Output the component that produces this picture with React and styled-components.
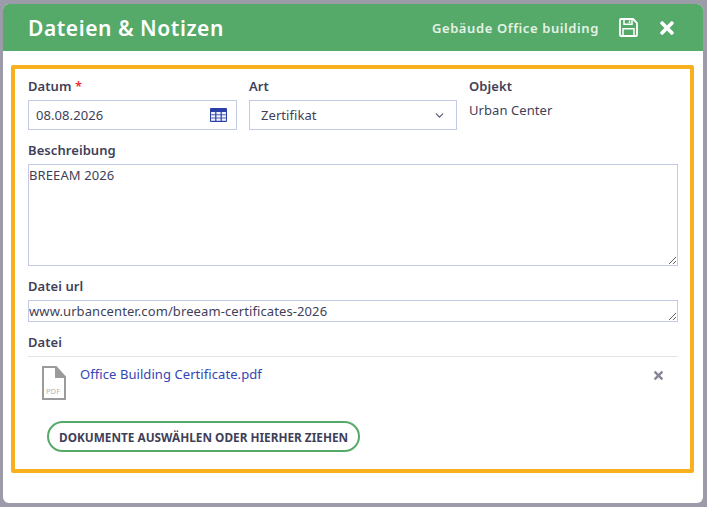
import React from "react";
import styled, { createGlobalStyle } from "styled-components";
import { FaTimes } from "react-icons/fa";
import { ChevronDown } from "lucide-react";

const Global = createGlobalStyle`
  html, body { margin: 0; padding: 0; }
  body { background: #9b9ba9; font-family: "Noto Sans", sans-serif; color: #3f3f5a; letter-spacing: 0.07px; }
`;
const Backdrop = styled.div`
  width: 707px; height: 507px; box-sizing: border-box; padding: 4px 4px 4px 3px;
`;
const Modal = styled.div`
  height: 499px; background: #fff; border-radius: 6px; overflow: hidden;
  display: flex; flex-direction: column;
`;
const Header = styled.header`
  height: 47px; flex: none; background: #55aa69; color: #fff; display: flex; align-items: center;
  padding: 0 26px 0 25px;
`;
const Title = styled.h1`
  margin: 1px 0 0; font-size: 21px; font-weight: 600; letter-spacing: 0.55px; flex: 1;
`;
const Context = styled.span`
  font-size: 13px; font-weight: 600; letter-spacing: 0.6px; opacity: .85; margin-right: 20px;
`;
const SaveButton = styled.span`
  display: flex; margin: 0 0 1px 0;
`;
const CloseButton = styled.span`
  display: flex; font-size: 20px; margin: 0 0 0 19px;
`;
const Frame = styled.section`
  margin: 14px 9px 0 8px; height: 408px; box-sizing: border-box; border: 4px solid #f7b11e;
  border-radius: 2px; padding: 8px 12px 0 13px; display: flex; flex-direction: column;
`;
const TopRow = styled.div`
  display: grid; grid-template-columns: 209px 208px 1fr; column-gap: 12px;
`;
const Field = styled.div` display: flex; flex-direction: column; `;
const Label = styled.label`
  font-size: 13px; font-weight: 600; line-height: 18px; margin-top: ${p => p.$mt ?? 0}px;
  margin-bottom: ${p => p.$mb ?? 5}px; display: block;
`;
const Required = styled.span` color: #f02a2a; `;
const ControlBox = styled.div`
  height: 30px; box-sizing: border-box; border: 1px solid #c3cae3; display: flex; align-items: center;
  justify-content: space-between; font-size: 13px; padding: ${p => p.$pad};
`;
const StaticValue = styled.div` font-size: 13px; line-height: 18px; margin-top: 1px; `;
const Area = styled.textarea`
  display: block; width: 100%; box-sizing: border-box; height: ${p => p.$h}px; border: 1px solid #c3cae3;
  border-radius: 0; padding: 1px 0; margin: 0 0 ${p => p.$mb}px; font: 13px/18px "Noto Sans", sans-serif;
  letter-spacing: 0.1px; color: #3f3f5a; outline: none; background: #fff;
`;
const Divider = styled.div` border-top: 1px solid #e4e4e8; margin-top: 5px; `;
const FileRow = styled.div`
  display: flex; align-items: flex-start; padding: 9px 13px 0 14px; height: 45px;
`;
const FileLink = styled.a`
  font-size: 13px; line-height: 18px; color: #3346b4; text-decoration: none; flex: 1;
  margin: -1px 0 0 14px;
`;
const RemoveBtn = styled.span` color: #85859a; display: flex; font-size: 13px; margin-top: 3px; `;
const UploadBtn = styled.button`
  align-self: flex-start; margin: 10px 0 0 19px; height: 31px; padding: 0 10px; background: #fff;
  border: 2px solid #55aa69; border-radius: 16px; font: 700 11.8px "Noto Sans", sans-serif; color: #3f3f5a;
`;

function SaveIcon() {
  return (
    <svg width="19" height="19" viewBox="0 0 19 19" fill="none" stroke="#fff" aria-hidden="true">
      <path d="M1 2a1 1 0 0 1 1-1H14L18 5V17a1 1 0 0 1-1 1H2a1 1 0 0 1-1-1Z" strokeWidth="1.8" />
      <path d="M5 1.5V6.2H13V1.5" strokeWidth="1.5" />
      <path d="M4 18V10.7H15V18" strokeWidth="1.5" />
      <path d="M10.5 2.5V5" strokeWidth="1.5" />
    </svg>
  );
}
function CalendarIcon() {
  return (
    <svg width="17" height="14" viewBox="0 0 17 14" aria-hidden="true">
      <rect x="0" y="0" width="17" height="14" rx="1" fill="#2b3fa8" />
      <g fill="#eef0fa">
        {[4, 7.2, 10.4].map(y => [1, 6.4, 11.8].map(x => (
          <rect key={`${x}-${y}`} x={x} y={y} width="4.2" height="2.4" />
        )))}
      </g>
    </svg>
  );
}
function PdfIcon() {
  return (
    <svg width="24" height="34" viewBox="0 0 24 34" aria-hidden="true">
      <path d="M1 1H14L23 11V33H1Z" fill="#fff" stroke="#9b9b9b" strokeWidth="2" />
      <path d="M13 0L24 12H13Z" fill="#9b9b9b" />
      <text x="4" y="28" fontFamily="Noto Sans, sans-serif" fontSize="7.5" fill="#b4b4b4">PDF</text>
    </svg>
  );
}

export default function App() {
  return (
    <Backdrop>
      <Global />
      <Modal>
        <Header>
          <Title>Dateien &amp; Notizen</Title>
          <Context>Gebäude Office building</Context>
          <SaveButton><SaveIcon /></SaveButton>
          <CloseButton><FaTimes /></CloseButton>
        </Header>
        <Frame>
          <TopRow>
            <Field>
              <Label>Datum <Required>*</Required></Label>
              <ControlBox $pad="0 9px 0 7px">08.08.2026<CalendarIcon /></ControlBox>
            </Field>
            <Field>
              <Label>Art</Label>
              <ControlBox $pad="0 10px 0 11px">Zertifikat<ChevronDown size={13} color="#55556e" /></ControlBox>
            </Field>
            <Field>
              <Label>Objekt</Label>
              <StaticValue>Urban Center</StaticValue>
            </Field>
          </TopRow>
          <Label $mt={11}>Beschreibung</Label>
          <Area $h={102} $mb={11} defaultValue="BREEAM 2026" />
          <Label>Datei url</Label>
          <Area $h={22} $mb={11} defaultValue="www.urbancenter.com/breeam-certificates-2026" />
          <Label $mb={0}>Datei</Label>
          <Divider />
          <FileRow>
            <PdfIcon />
            <FileLink href="#">Office Building Certificate.pdf</FileLink>
            <RemoveBtn><FaTimes /></RemoveBtn>
          </FileRow>
          <UploadBtn>DOKUMENTE AUSWÄHLEN ODER HIERHER ZIEHEN</UploadBtn>
        </Frame>
      </Modal>
    </Backdrop>
  );
}
